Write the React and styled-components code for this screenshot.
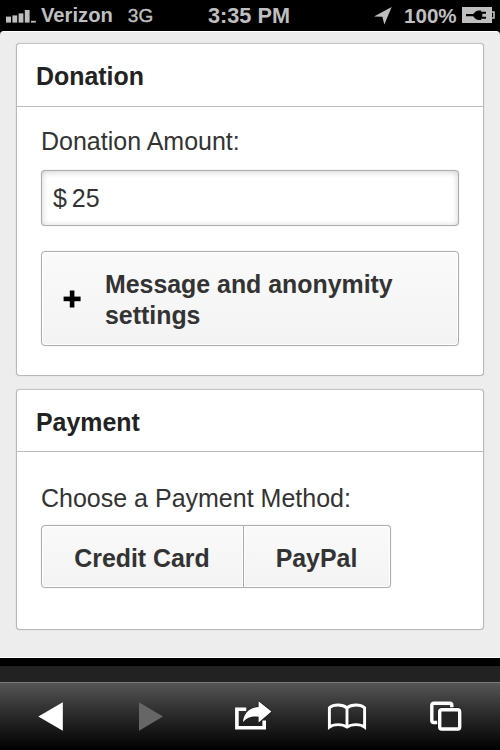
import React, { useState } from 'react';
import styled, { createGlobalStyle, css } from 'styled-components';

const App = () => {
  const [amount, setAmount] = useState('$ 25');

  return (
    <Screen>
      <GlobalStyle />
      <StatusBar>
        <Carrier>
          <SignalIcon />
          <CarrierName>Verizon</CarrierName>
          <Network>3G</Network>
        </Carrier>
        <Clock>3:35 PM</Clock>
        <Power>
          <LocationIcon />
          <Percent>100%</Percent>
          <BatteryIcon />
        </Power>
      </StatusBar>

      <Page>
        <Card height={333}>
          <CardTitle>Donation</CardTitle>
          <CardBody top={19}>
            <Label htmlFor="amount">Donation Amount:</Label>
            <AmountInput
              id="amount"
              value={amount}
              onChange={e => setAmount(e.target.value)}
            />
            <SettingsButton>
              <PlusIcon />
              <SettingsText>Message and anonymity settings</SettingsText>
            </SettingsButton>
          </CardBody>
        </Card>

        <Card height={241}>
          <CardTitle>Payment</CardTitle>
          <CardBody top={31}>
            <Label as="div">Choose a Payment Method:</Label>
            <Methods>
              <MethodButton width={202}>Credit Card</MethodButton>
              <MethodButton width={146}>PayPal</MethodButton>
            </Methods>
          </CardBody>
        </Card>
      </Page>

      <Gap />
      <Toolbar>
        <ToolbarButton aria-label="Back">
          <BackIcon />
        </ToolbarButton>
        <ToolbarButton aria-label="Forward">
          <ForwardIcon />
        </ToolbarButton>
        <ToolbarButton aria-label="Share">
          <ShareIcon />
        </ToolbarButton>
        <ToolbarButton aria-label="Bookmarks">
          <BookIcon />
        </ToolbarButton>
        <ToolbarButton aria-label="Pages">
          <PagesIcon />
        </ToolbarButton>
      </Toolbar>
    </Screen>
  );
};

const SignalIcon = () => (
  <svg width="30" height="15" viewBox="0 0 30 15" fill="#bfbfbf">
    <rect x="0" y="8.6" width="5" height="6" />
    <rect x="6.4" y="7.4" width="4.8" height="7.2" />
    <rect x="12.6" y="5.4" width="4.8" height="9.2" />
    <rect x="18.8" y="2" width="4.8" height="12.6" />
    <rect x="25" y="12.8" width="4.8" height="1.8" />
  </svg>
);

const LocationIcon = () => (
  <svg width="18" height="18" viewBox="0 0 18 18" fill="#bfbfbf">
    <path d="M17.7 0 L10.3 17.5 L8.4 9.8 L0 9.6 Z" />
  </svg>
);

const BatteryIcon = () => (
  <svg width="34" height="17" viewBox="0 0 34 17">
    <rect x="0" y="0" width="30" height="16" fill="#bfbfbf" />
    <path d="M30 5 h2 v6 h-2" fill="none" stroke="#bfbfbf" strokeWidth="1.6" />
    <path
      d="M4 7 H11.2 C12.7 5 14.5 3.4 17 3.4 H19.2 V4.8 H24 V6.7 H20.3 V9.8 H24 V11.7 H19.2 V13.1 H17 C14.5 13.1 12.7 11.7 11.2 9.3 H4 Z"
      fill="#000"
    />
  </svg>
);

const PlusIcon = () => (
  <svg width="18" height="20" viewBox="0 0 18 20" fill="#000">
    <rect x="6.8" y="0.5" width="4.6" height="17" />
    <rect x="0.6" y="6.6" width="17" height="4.6" />
  </svg>
);

const BackIcon = () => (
  <svg width="26" height="30" viewBox="0 0 26 30">
    <path d="M0.3 14.5 L24.8 0.3 V28.7 Z" fill="#fff" />
  </svg>
);

const ForwardIcon = () => (
  <svg width="26" height="30" viewBox="0 0 26 30">
    <path d="M26 14.5 L2 0.3 V28.7 Z" fill="#666" />
  </svg>
);

const ShareIcon = () => (
  <svg width="38" height="31" viewBox="0 0 38 31">
    <path
      d="M12.2 8.2 H2.9 V26.8 H30.2 V19.6"
      fill="none"
      stroke="#fff"
      strokeWidth="3.6"
    />
    <path
      d="M24.6 0.3 L37.4 10.6 L24.6 21.5 V15.7 C17.5 15.2 13.2 16.2 9 21.2 C9.4 12.6 15.5 6.5 24.6 6 Z"
      fill="#fff"
      stroke="#1b1b1b"
      strokeWidth="1.6"
      paintOrder="stroke"
    />
  </svg>
);

const BookIcon = () => (
  <svg width="40" height="28" viewBox="0 0 40 28">
    <path
      d="M20 4.8 C15.5 1 6.5 1 2.4 4.8 V24 C6.5 20.8 15.5 20.8 20 24 C24.5 20.8 33.5 20.8 37.6 24 V4.8 C33.5 1 24.5 1 20 4.8 Z"
      fill="none"
      stroke="#fff"
      strokeWidth="2.9"
      strokeLinejoin="miter"
    />
    <path d="M20 4.5 V24" stroke="#fff" strokeWidth="2.9" />
  </svg>
);

const PagesIcon = () => (
  <svg width="34" height="31" viewBox="0 0 34 31" fill="none">
    <rect x="2.8" y="2.2" width="20" height="19.3" rx="2" stroke="#fff" strokeWidth="3.4" />
    <rect x="8.2" y="6.2" width="25" height="24" rx="4" fill="#1c1c1c" />
    <rect x="10.7" y="8.8" width="20" height="19.2" rx="2" fill="#222" stroke="#fff" strokeWidth="3.4" />
  </svg>
);

const GlobalStyle = createGlobalStyle`
  * {
    box-sizing: border-box;
  }
  body {
    margin: 0;
    background: #000;
    font-family: 'Liberation Sans', Arial, sans-serif;
  }
  button {
    font-family: inherit;
    margin: 0;
    padding: 0;
    border: none;
  }
  svg {
    display: block;
    flex-shrink: 0;
  }
`;

const Screen = styled.div`
  width: 500px;
  height: 750px;
  overflow: hidden;
  display: flex;
  flex-direction: column;
  background: #000;
`;

const StatusBar = styled.div`
  height: 31px;
  display: grid;
  grid-template-columns: 208px 1fr 126px;
  color: #bfbfbf;
  font-weight: bold;
  line-height: 31px;
  white-space: nowrap;
`;

const Carrier = styled.div`
  display: flex;
  align-items: center;
  padding-left: 6px;
`;

const CarrierName = styled.span`
  margin-left: 5px;
  font-size: 20.2px;
`;

const Network = styled.span`
  margin-left: 15px;
  font-size: 19px;
  font-weight: normal;
  -webkit-text-stroke: 0.4px #bfbfbf;
`;

const Clock = styled.div`
  font-size: 21.7px;
`;

const Power = styled.div`
  display: flex;
  align-items: center;
`;

const Percent = styled.span`
  margin: 0 5px 0 12px;
  font-size: 20.6px;
`;

const Page = styled.main`
  height: 627px;
  padding: 11px 16px 0;
  display: flex;
  flex-direction: column;
  gap: 13px;
  background: #ededed;
  border-top: 1px solid #fff;
  border-bottom: 1px solid #fff;
  border-radius: 4px 4px 0 0;
`;

const Card = styled.section`
  height: ${props => props.height}px;
  border: 1px solid #b8b8b8;
  border-top-color: #c4c4c4;
  border-radius: 4px;
  background: #fff;
  box-shadow: 0 0 1px rgba(0, 0, 0, 0.25);
`;

const CardTitle = styled.h2`
  margin: 0;
  height: 63px;
  padding: 3px 19px 0;
  border-bottom: 1px solid #bbb;
  color: #222;
  font-size: 24.9px;
  line-height: 59px;

  ${Card} + ${Card} & {
    height: 62px;
  }
`;

const CardBody = styled.div`
  padding: ${props => props.top}px 24px 0;
`;

const Label = styled.label`
  display: block;
  color: #333;
  font-size: 25px;
  line-height: 31px;
`;

const AmountInput = styled.input`
  display: block;
  width: 100%;
  height: 56px;
  margin: 13px 0 25px;
  padding: 0 11px;
  border: 1px solid #adadad;
  border-radius: 4px;
  outline: none;
  box-shadow: inset 0 1px 6px rgba(0, 0, 0, 0.2), 0 0 1px rgba(0, 0, 0, 0.3);
  color: #333;
  font-family: inherit;
  font-size: 25px;
  word-spacing: -2px;
`;

const raised = css`
  background: linear-gradient(#fafafa, #f3f3f3);
  border: 1px solid #adadad;
  box-shadow: inset 0 0 0 1px #fff, 0 0 1px rgba(0, 0, 0, 0.25);
  color: #333;
  font-size: 24.9px;
  font-weight: bold;
`;

const SettingsButton = styled.button`
  ${raised}
  width: 100%;
  height: 95px;
  padding: 2px 50px 0 21px;
  border-radius: 4px;
  display: flex;
  align-items: center;
  gap: 24px;
`;

const SettingsText = styled.span`
  line-height: 31px;
  text-align: left;
`;

const Methods = styled.div`
  display: flex;
  margin-top: 11px;
`;

const MethodButton = styled.button`
  ${raised}
  width: ${props => props.width + 1}px;
  height: 63px;
  padding: 3px 1px 0 0;

  &:first-child {
    border-radius: 4px 0 0 4px;
  }
  &:last-child {
    border-left: none;
    border-radius: 0 4px 4px 0;
  }
`;

const Gap = styled.div`
  height: 24px;
  border-top: 8px solid #000;
  background: #222;
`;

const Toolbar = styled.nav`
  height: 68px;
  padding-left: 38px;
  display: grid;
  grid-template-columns: 99px 97px 93px 102px 36px;
  align-items: center;
  border-top: 1px solid #7c7c7c;
  background: linear-gradient(#555, #2c2c2c 45%, #000);
`;

const ToolbarButton = styled.button`
  background: none;
  display: flex;
`;

export default App;
